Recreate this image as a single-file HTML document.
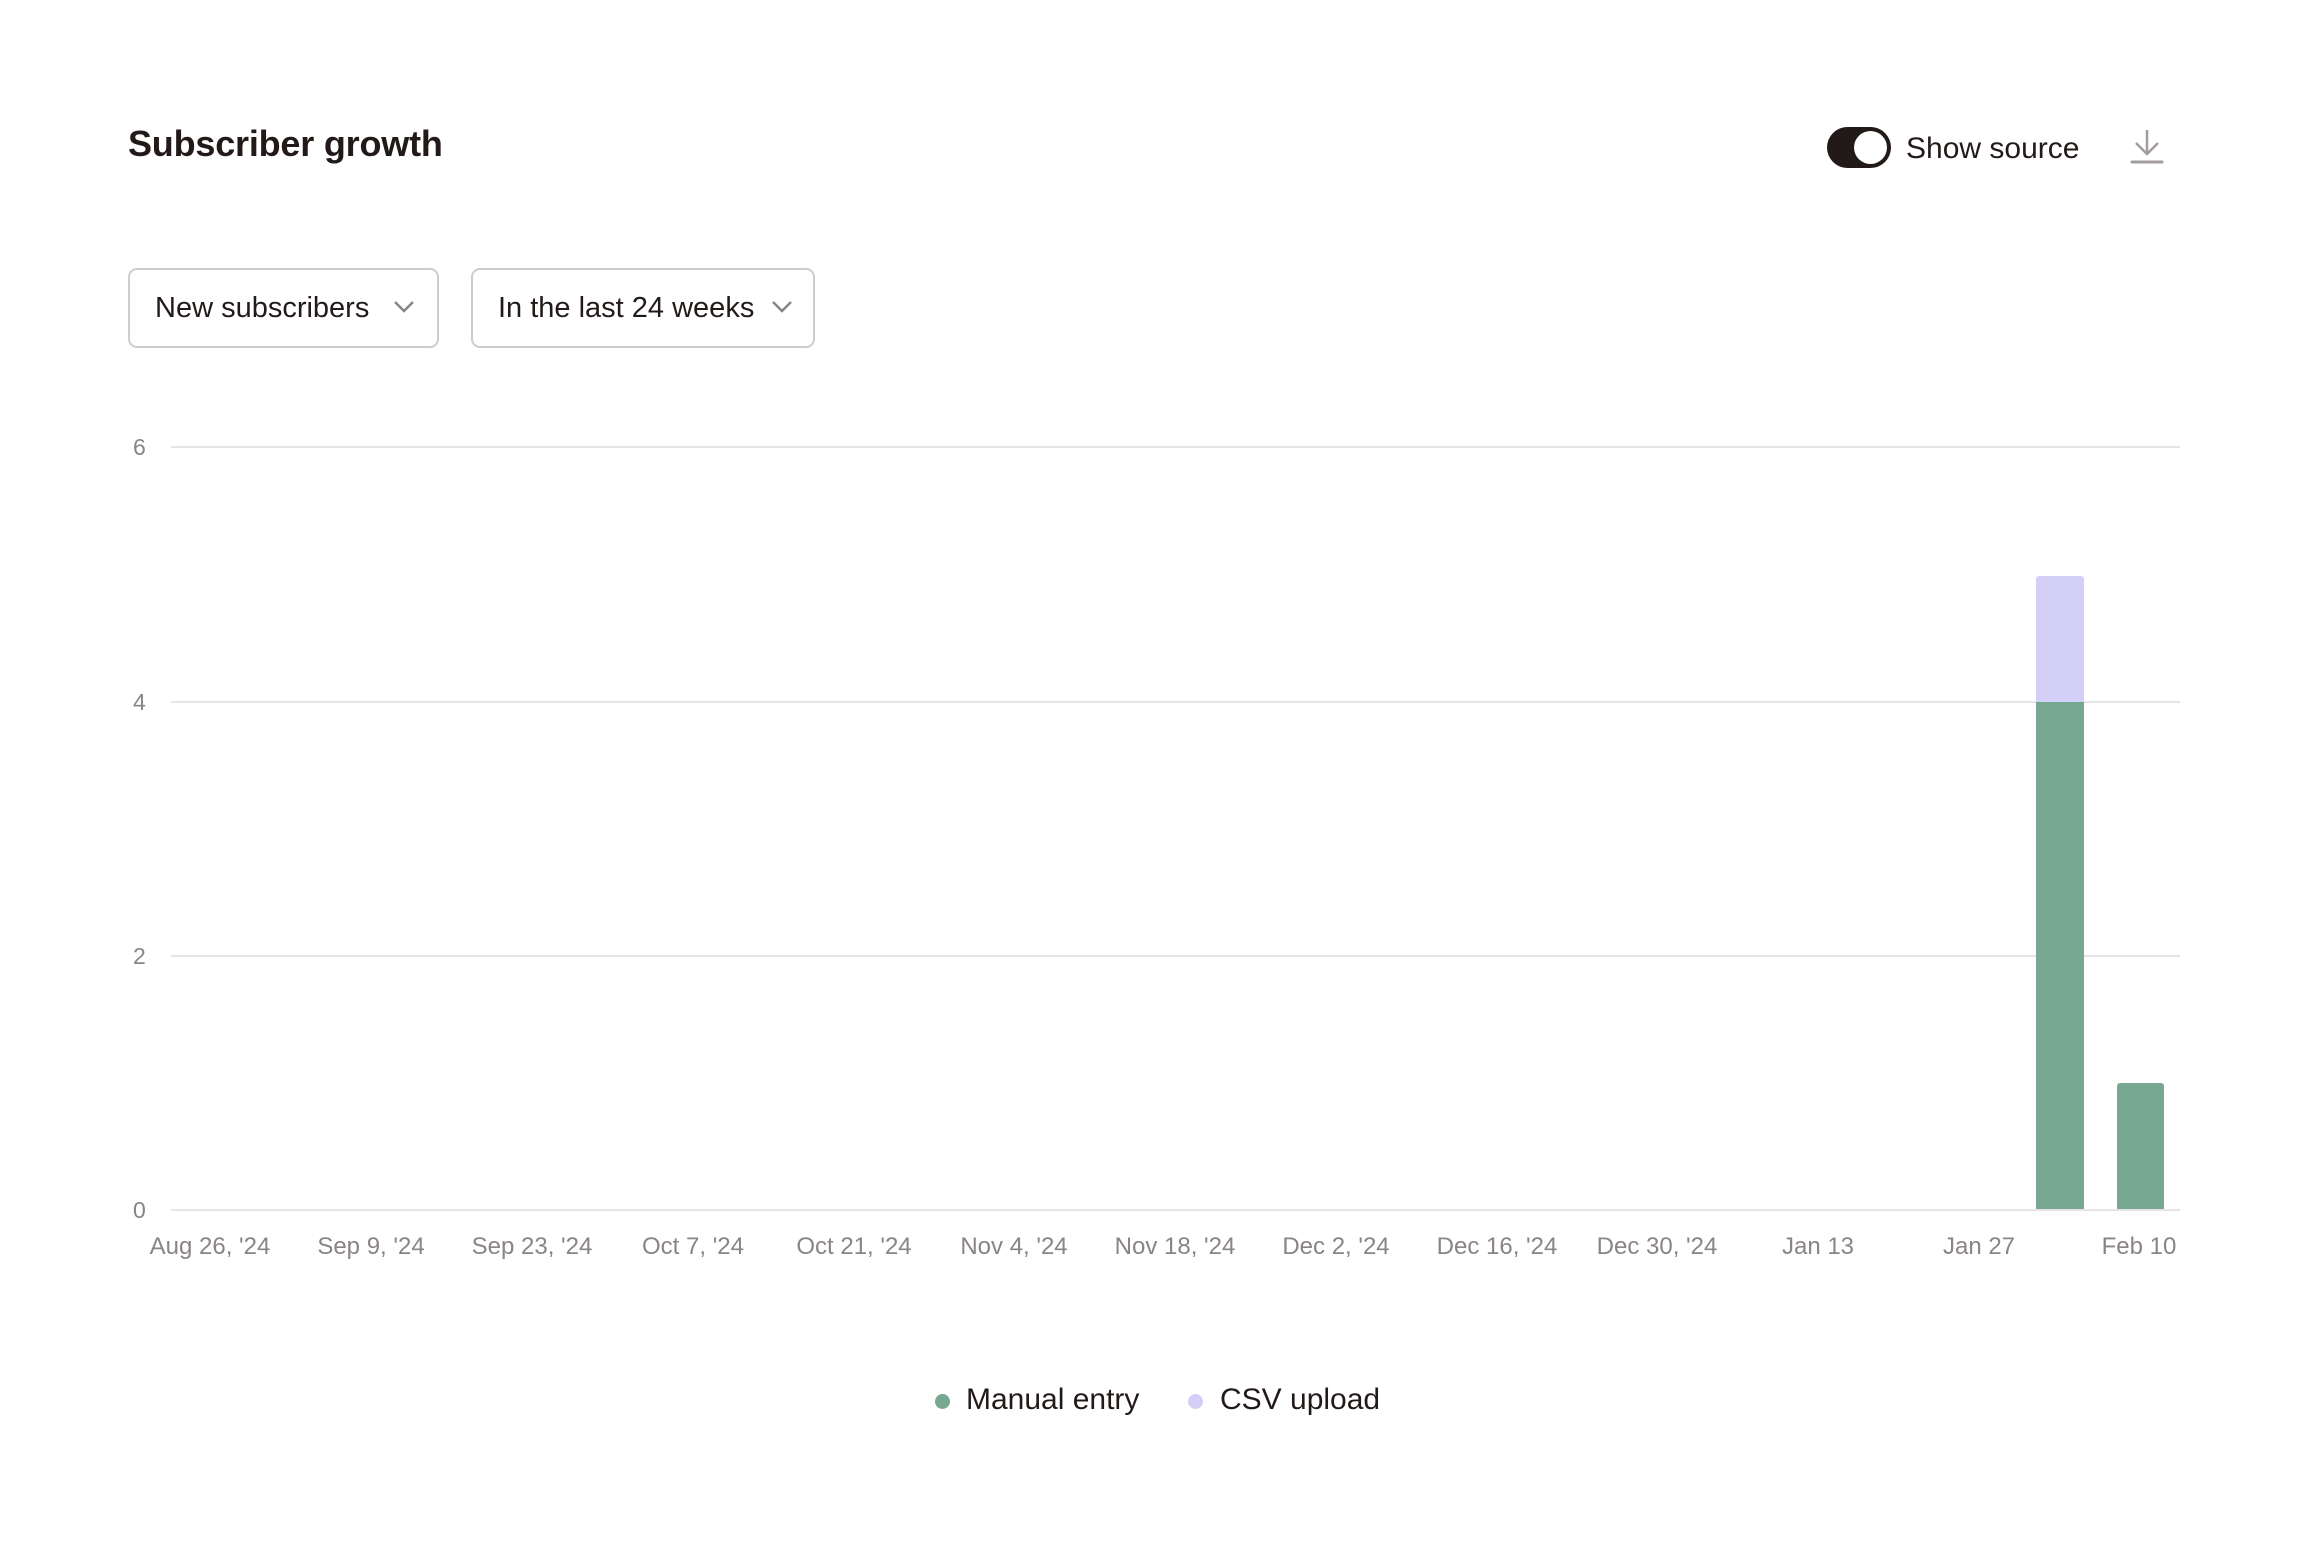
<!DOCTYPE html>
<html><head><meta charset="utf-8"><style>
*{margin:0;padding:0;box-sizing:border-box}
body{width:2309px;height:1543px;background:#fff;position:relative;font-family:"Liberation Sans",sans-serif;color:#221a18;overflow:hidden}
.a{position:absolute;white-space:nowrap}
.box{position:absolute;border:2px solid #cfcccc;border-radius:9px;height:80px;top:268px}
.box span{position:absolute;left:25px;top:20px;font-size:29px;line-height:36px;color:#221a18}
.grid{position:absolute;left:171px;width:2009px;height:2px;background:#e6e4e4}
.yl{position:absolute;left:133px;font-size:23px;color:#8a8484;line-height:24px}
.xl{position:absolute;top:1233px;font-size:24px;color:#8a8484;transform:translateX(-50%);white-space:nowrap}
</style></head><body>
<div class="a" style="left:128px;top:123px;font-size:36px;font-weight:bold;letter-spacing:-0.2px">Subscriber growth</div>
<div class="a" style="left:1827px;top:127px;width:64px;height:41px;border-radius:21px;background:#221a18"><div style="position:absolute;right:4px;top:4px;width:33px;height:33px;border-radius:50%;background:#fff"></div></div>
<div class="a" style="left:1906px;top:132px;font-size:30px;font-weight:500">Show source</div>
<svg class="a" style="left:2129px;top:128px" width="36" height="36" viewBox="0 0 36 36"><path d="M18 2V26M7 15L18 26L29 15" fill="none" stroke="#a29c9b" stroke-width="2.5"/><path d="M3 34H33" stroke="#a29c9b" stroke-width="3" stroke-linecap="round"/></svg>
<div class="box" style="left:128px;width:311px"><span>New subscribers</span><svg style="position:absolute;left:263px;top:30px" width="22" height="14" viewBox="0 0 22 14"><path d="M2 2L11 11L20 2" fill="none" stroke="#8a8484" stroke-width="2.5"/></svg></div>
<div class="box" style="left:471px;width:344px"><span>In the last 24 weeks</span><svg style="position:absolute;left:298px;top:30px" width="22" height="14" viewBox="0 0 22 14"><path d="M2 2L11 11L20 2" fill="none" stroke="#8a8484" stroke-width="2.5"/></svg></div>
<div class="grid" style="top:446px"></div><div class="grid" style="top:701px"></div><div class="grid" style="top:955px"></div><div class="grid" style="top:1209px"></div>
<div class="yl" style="top:435px">6</div><div class="yl" style="top:690px">4</div><div class="yl" style="top:944px">2</div><div class="yl" style="top:1198px">0</div>
<div class="a" style="left:2036px;top:576px;width:48px;height:126px;background:#d4cff6;border-radius:3px 3px 0 0"></div>
<div class="a" style="left:2036px;top:702px;width:48px;height:507px;background:#78a892"></div>
<div class="a" style="left:2117px;top:1083px;width:47px;height:126px;background:#78a892;border-radius:3px 3px 0 0"></div>
<div class="xl" style="left:210px">Aug 26, '24</div>
<div class="xl" style="left:371px">Sep 9, '24</div>
<div class="xl" style="left:532px">Sep 23, '24</div>
<div class="xl" style="left:693px">Oct 7, '24</div>
<div class="xl" style="left:854px">Oct 21, '24</div>
<div class="xl" style="left:1014px">Nov 4, '24</div>
<div class="xl" style="left:1175px">Nov 18, '24</div>
<div class="xl" style="left:1336px">Dec 2, '24</div>
<div class="xl" style="left:1497px">Dec 16, '24</div>
<div class="xl" style="left:1657px">Dec 30, '24</div>
<div class="xl" style="left:1818px">Jan 13</div>
<div class="xl" style="left:1979px">Jan 27</div>
<div class="xl" style="left:2139px">Feb 10</div>
<div class="a" style="left:935px;top:1394px;width:15px;height:15px;border-radius:50%;background:#78a892"></div>
<div class="a" style="left:966px;top:1383px;font-size:30px">Manual entry</div>
<div class="a" style="left:1188px;top:1394px;width:15px;height:15px;border-radius:50%;background:#d4cff6"></div>
<div class="a" style="left:1220px;top:1383px;font-size:30px">CSV upload</div>
</body></html>
